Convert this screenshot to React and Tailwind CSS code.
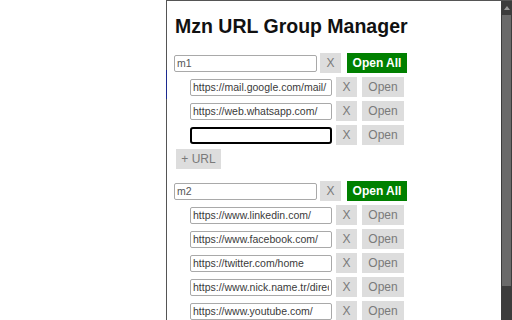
import React from 'react';

const GROUPS = [
  {
    name: 'm1',
    urls: ['https://mail.google.com/mail/', 'https://web.whatsapp.com/', ''],
    showAdd: true,
  },
  {
    name: 'm2',
    urls: [
      'https://www.linkedin.com/',
      'https://www.facebook.com/',
      'https://twitter.com/home',
      'https://www.nick.name.tr/directory',
      'https://www.youtube.com/',
    ],
    showAdd: false,
  },
];

const GrayButton = ({ className = '', children }) => (
  <button className={`h-[20px] bg-[#dddddd] text-[12px] leading-none text-[#7a7a7a] ${className}`}>
    {children}
  </button>
);

const UrlRow = ({ url, focused }) => (
  <div className="flex h-[24px] items-center">
    <input
      readOnly
      value={url}
      className={`ml-[16px] h-[17px] w-[142px] px-[2px] text-[10.5px] text-[#3a3a3a] outline-none ${
        focused ? 'border-2 border-black rounded-[3px]' : 'border border-[#a9a9a9] rounded-[2px]'
      }`}
    />
    <GrayButton className="ml-[4px] w-[21px]">X</GrayButton>
    <GrayButton className="ml-[5px] w-[42px]">Open</GrayButton>
  </div>
);

const Group = ({ group, className = '' }) => (
  <div className={className}>
    <div className="flex h-[24px] items-center">
      <input
        readOnly
        value={group.name}
        className="h-[17px] w-[143px] rounded-[2px] border border-[#a9a9a9] px-[2px] text-[10.5px] text-[#555] outline-none"
      />
      <GrayButton className="ml-[3px] w-[21px]">X</GrayButton>
      <button className="ml-[6px] h-[20px] w-[60px] bg-[#008000] text-[12px] font-bold leading-none text-white">
        Open All
      </button>
    </div>
    {group.urls.map((u, i) => (
      <UrlRow key={i} url={u} focused={group.showAdd && u === ''} />
    ))}
    {group.showAdd && (
      <div className="flex h-[24px] items-center">
        <GrayButton className="ml-[2px] w-[45px]">+ URL</GrayButton>
      </div>
    )}
  </div>
);

export default function App() {
  return (
    <div className="flex h-[320px] w-[512px] overflow-hidden bg-white font-['Liberation_Sans',Arial,sans-serif]">
      <div className="w-[166px] shrink-0" />
      <div className="relative flex flex-1 border-l border-t border-[#555]">
        {/* odd blue bit on the popup edge */}
        <div className="absolute left-[-1px] top-[69px] h-[29px] w-[1px] bg-[#1c2a8f]" />
        <div className="flex-1 overflow-hidden pl-[7px] pt-[15px]">
          <h1 className="ml-[1px] text-[19.5px] font-bold leading-[20px] text-[#111]">Mzn URL Group Manager</h1>
          <Group group={GROUPS[0]} className="mt-[15px]" />
          <Group group={GROUPS[1]} className="mt-[8px]" />
        </div>
        <div className="flex w-[11px] shrink-0 flex-col bg-[#3c3c3c]">
          <div className="flex h-[14px] items-center justify-center">
            <svg width="6" height="4" viewBox="0 0 6 4">
              <path d="M0 4 L3 0 L6 4 Z" fill="#9a9a9a" />
            </svg>
          </div>
          <div className="mx-[1px] h-[271px] bg-[#6a6a6a]" />
        </div>
      </div>
    </div>
  );
}
